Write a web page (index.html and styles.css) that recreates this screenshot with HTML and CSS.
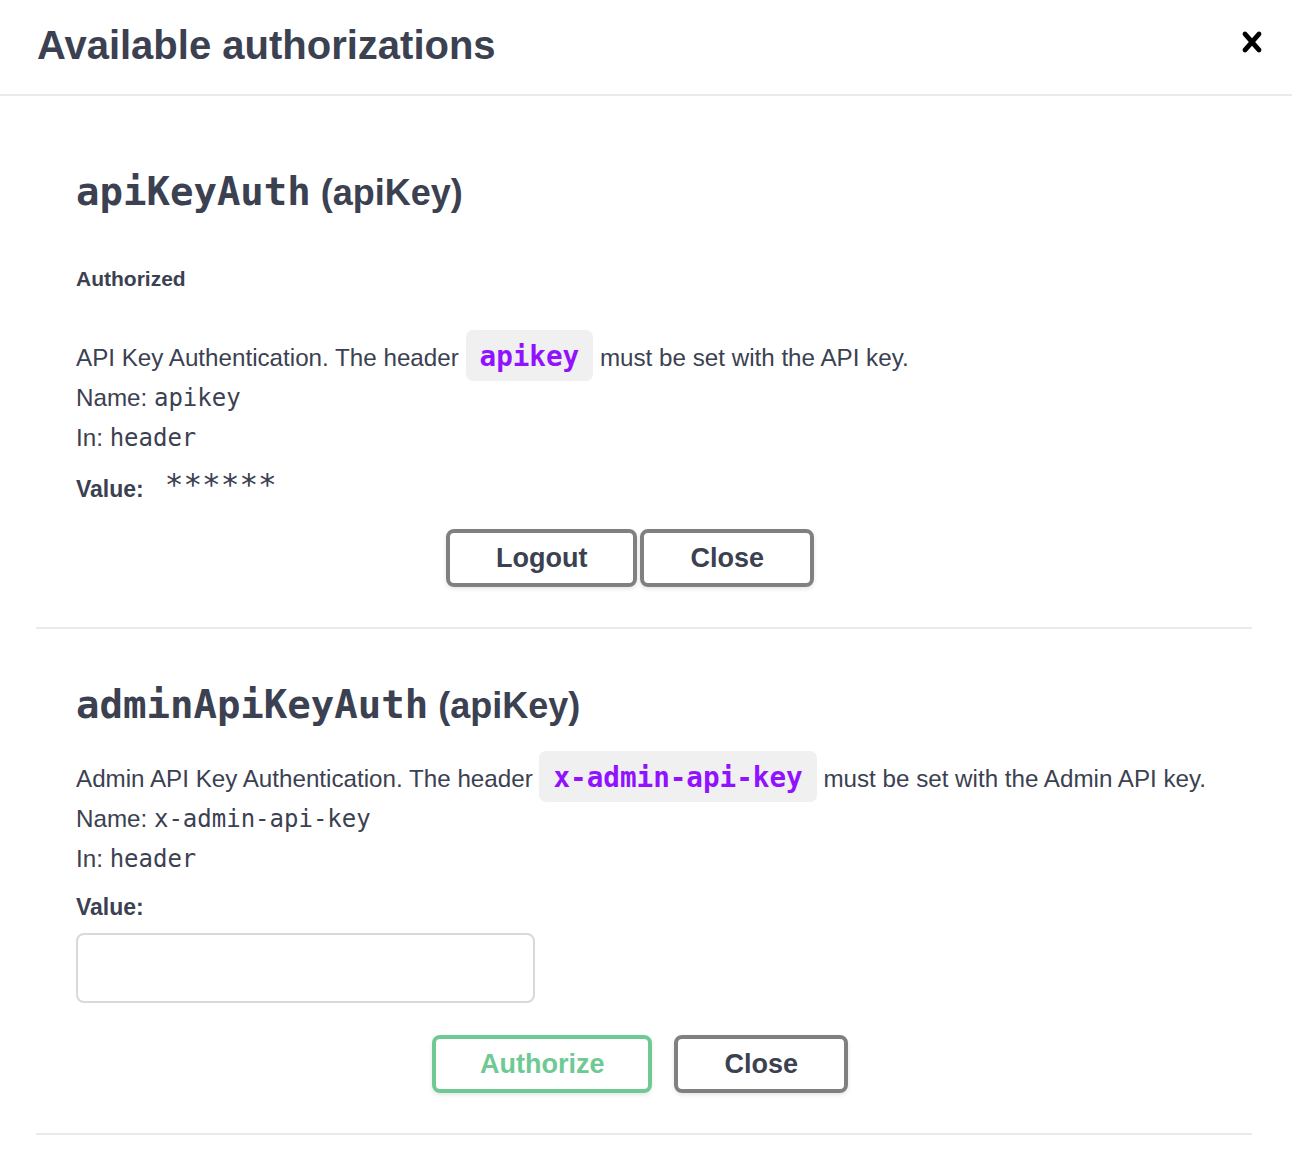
FILE: index.html
```html
<!DOCTYPE html>
<html lang="en">
<head>
<meta charset="utf-8">
<title>Available authorizations</title>
<link rel="stylesheet" href="styles.css">
</head>
<body>
<div class="modal">
  <div class="modal-header">
    <h3 class="modal-title">Available authorizations</h3>
    <button class="close-modal" aria-label="Close">
      <svg viewBox="0 0 20 20" width="40" height="40" aria-hidden="true"><path d="M14.348 14.849c-.469.469-1.229.469-1.697 0L10 11.819l-2.651 3.029c-.469.469-1.229.469-1.697 0-.469-.469-.469-1.229 0-1.697l2.758-3.15-2.759-3.152c-.469-.469-.469-1.228 0-1.697.469-.469 1.228-.469 1.697 0L10 8.183l2.651-3.031c.469-.469 1.228-.469 1.697 0 .469.469.469 1.229 0 1.697l-2.758 3.152 2.758 3.150c.469.469.469 1.229 0 1.698z"/></svg>
    </button>
  </div>
  <div class="modal-content">
    <div class="auth-container">
      <h4 class="auth-title"><code class="auth-name">apiKeyAuth</code> (apiKey)</h4>
      <h6 class="auth-status">Authorized</h6>
      <div class="auth-row auth-desc">API Key Authentication. The header <code class="chip">apikey</code> must be set with the API key.</div>
      <div class="auth-row">Name: <code class="mono">apikey</code></div>
      <div class="auth-row">In: <code class="mono">header</code></div>
      <div class="auth-row value-row"><label class="value-label">Value:</label><code class="masked">******</code></div>
      <div class="btn-wrapper">
        <button class="btn btn-logout">Logout</button>
        <button class="btn btn-done done-logged">Close</button>
      </div>
    </div>
    <div class="auth-container">
      <h4 class="auth-title"><code class="auth-name">adminApiKeyAuth</code> (apiKey)</h4>
      <div class="auth-row auth-desc desc-second">Admin API Key Authentication. The header <code class="chip">x-admin-api-key</code> must be set with the Admin API key.</div>
      <div class="auth-row">Name: <code class="mono">x-admin-api-key</code></div>
      <div class="auth-row">In: <code class="mono">header</code></div>
      <div class="auth-row label-row"><label class="value-label" for="admin-key">Value:</label></div>
      <input class="value-input" id="admin-key" type="text">
      <div class="btn-wrapper">
        <button class="btn btn-authorize">Authorize</button>
        <button class="btn btn-done done-second">Close</button>
      </div>
    </div>
  </div>
</div>
</body>
</html>
```

FILE: styles.css
```css
html, body {
  margin: 0;
  padding: 0;
  background: #ffffff;
}

body {
  font-family: "Liberation Sans", Arial, sans-serif;
  color: #3b4151;
}

.modal {
  width: 1292px;
}

.modal-header {
  display: flex;
  align-items: flex-start;
  height: 94px;
  border-bottom: 2px solid #ebebeb;
}

.modal-title {
  flex: 1;
  margin: 22px 0 0;
  padding: 0 0 0 37px;
  font-size: 40px;
  line-height: 46px;
  font-weight: 700;
  color: #3b4151;
}

.close-modal {
  margin: 22px 20px 0 0;
  padding: 0;
  border: 0;
  background: transparent;
  width: 40px;
  height: 40px;
  cursor: pointer;
}

.close-modal svg {
  display: block;
  fill: #000000;
}

.modal-content {
  padding: 40px 40px 0 36px;
}

.auth-container {
  padding: 20px 40px;
  margin-bottom: 20px;
  border-bottom: 2px solid #ebebeb;
}

.auth-title {
  margin: 13px 0 0;
  font-size: 36px;
  line-height: 48px;
  font-weight: 700;
  color: #3b4151;
}

.auth-name {
  font-family: "DejaVu Sans Mono", "Liberation Mono", monospace;
  font-size: 39px;
  line-height: 1;
  font-weight: 700;
}

.auth-status {
  margin: 50px 0 0;
  font-size: 21px;
  line-height: 24px;
  font-weight: 700;
  color: #3b4151;
}

.auth-row {
  font-size: 24.2px;
  line-height: 40px;
  color: #3b4151;
}

.auth-desc {
  margin-top: 47px;
}

.desc-second {
  margin-top: 29px;
}

.chip {
  font-family: "DejaVu Sans Mono", "Liberation Mono", monospace;
  font-size: 27.6px;
  line-height: 1;
  font-weight: 700;
  color: #9012fe;
  background: #f0f0f0;
  border-radius: 7px;
  padding: 10px 14px 8px;
}

.mono {
  font-family: "DejaVu Sans Mono", "Liberation Mono", monospace;
  font-size: 24px;
  line-height: 1;
}

.value-row {
  margin-top: 11px;
}

.value-label {
  font-size: 23px;
  font-weight: 700;
}

.masked {
  font-family: "DejaVu Sans Mono", "Liberation Mono", monospace;
  font-size: 31px;
  line-height: 1;
  margin-left: 21px;
  position: relative;
  top: -2px;
}

.label-row {
  margin-top: 8px;
}

.value-input {
  display: block;
  box-sizing: border-box;
  width: 459px;
  height: 70px;
  margin: 6px 0 12px;
  padding: 16px 20px;
  border: 2px solid #d9d9d9;
  border-radius: 8px;
  background: #ffffff;
  font-family: "Liberation Sans", Arial, sans-serif;
  font-size: 24px;
}

.btn-wrapper {
  display: flex;
  justify-content: center;
  padding: 20px 0;
}

.btn {
  font-family: "Liberation Sans", Arial, sans-serif;
  font-size: 27px;
  line-height: 32px;
  font-weight: 700;
  color: #3b4151;
  background: transparent;
  border: 4px solid #808080;
  border-radius: 8px;
  padding: 9px 46px;
  box-shadow: 0 2px 4px rgba(0, 0, 0, 0.1);
  cursor: pointer;
}

.btn-logout {
  margin-right: 3px;
}

.done-logged {
  margin-right: 28px;
}

.btn-authorize {
  color: #6ec993;
  border-color: #6ec993;
  padding: 9px 44px;
  margin-right: 22px;
}

.done-second {
  margin-right: 8px;
}
```
